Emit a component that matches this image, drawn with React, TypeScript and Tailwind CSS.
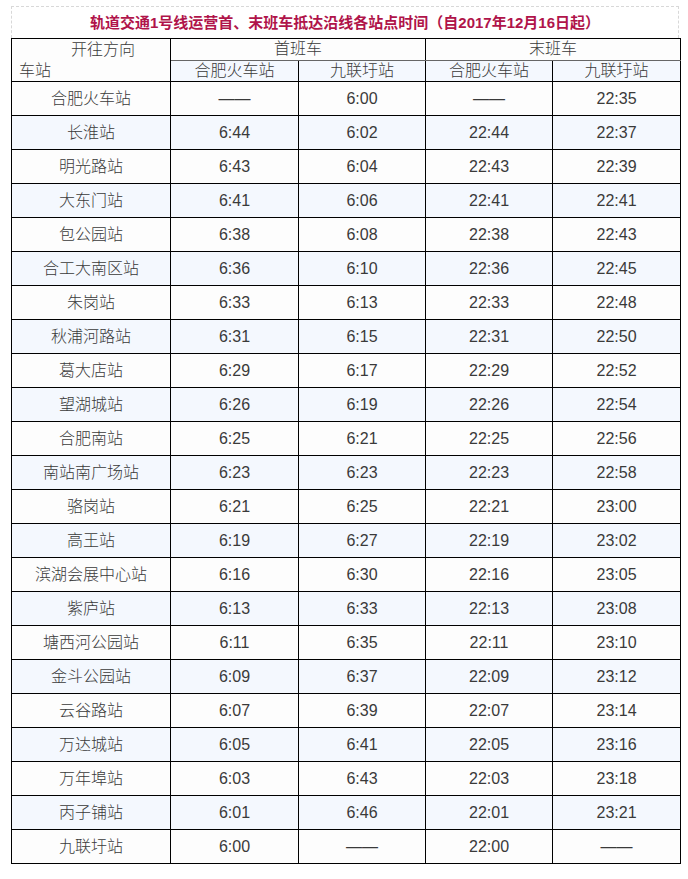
import React from "react";

const rows: [string, string, string, string, string][] = [
  ["合肥火车站", "——", "6:00", "——", "22:35"],
  ["长淮站", "6:44", "6:02", "22:44", "22:37"],
  ["明光路站", "6:43", "6:04", "22:43", "22:39"],
  ["大东门站", "6:41", "6:06", "22:41", "22:41"],
  ["包公园站", "6:38", "6:08", "22:38", "22:43"],
  ["合工大南区站", "6:36", "6:10", "22:36", "22:45"],
  ["朱岗站", "6:33", "6:13", "22:33", "22:48"],
  ["秋浦河路站", "6:31", "6:15", "22:31", "22:50"],
  ["葛大店站", "6:29", "6:17", "22:29", "22:52"],
  ["望湖城站", "6:26", "6:19", "22:26", "22:54"],
  ["合肥南站", "6:25", "6:21", "22:25", "22:56"],
  ["南站南广场站", "6:23", "6:23", "22:23", "22:58"],
  ["骆岗站", "6:21", "6:25", "22:21", "23:00"],
  ["高王站", "6:19", "6:27", "22:19", "23:02"],
  ["滨湖会展中心站", "6:16", "6:30", "22:16", "23:05"],
  ["紫庐站", "6:13", "6:33", "22:13", "23:08"],
  ["塘西河公园站", "6:11", "6:35", "22:11", "23:10"],
  ["金斗公园站", "6:09", "6:37", "22:09", "23:12"],
  ["云谷路站", "6:07", "6:39", "22:07", "23:14"],
  ["万达城站", "6:05", "6:41", "22:05", "23:16"],
  ["万年埠站", "6:03", "6:43", "22:03", "23:18"],
  ["丙子铺站", "6:01", "6:46", "22:01", "23:21"],
  ["九联圩站", "6:00", "——", "22:00", "——"],
];

const font = { fontFamily: '"Liberation Sans", "Noto Sans CJK SC", sans-serif' };

export default function App() {
  return (
    <div className="bg-white w-[688px] h-[879px] pt-[6px] pl-[11px]" style={font}>
      <div className="w-[668px] h-[32px] border-t border-l border-r border-dashed border-[#d8d8d8] flex items-center justify-center">
        <span className="text-[15px] font-bold text-[#b0144a] leading-[31px]">
          轨道交通1号线运营首、末班车抵达沿线各站点时间（自2017年12月16日起）
        </span>
      </div>
      <table className="table-fixed border-collapse w-[669px] text-[16px] text-[#3a3a3a] font-light">
        <colgroup>
          <col className="w-[159px]" />
          <col className="w-[128px]" />
          <col className="w-[127px]" />
          <col className="w-[127px]" />
          <col className="w-[128px]" />
        </colgroup>
        <thead>
          <tr className="h-[21px]">
            <td rowSpan={2} className="border border-black bg-[#fdfdfd] p-0 align-top">
              <div className="leading-[21px] pl-[59px] text-left">开往方向</div>
              <div className="leading-[21px] pl-[7px] text-left">车站</div>
            </td>
            <td colSpan={2} className="border border-black border-b-[#666] bg-[#fdfdfd] p-0 text-center leading-[20px]">首班车</td>
            <td colSpan={2} className="border border-black border-b-[#666] bg-[#fdfdfd] p-0 text-center leading-[20px]">末班车</td>
          </tr>
          <tr className="h-[21px]">
            {["合肥火车站", "九联圩站", "合肥火车站", "九联圩站"].map((t, i) => (
              <td key={i} className="border border-black border-t-[#666] bg-[#f4f8fe] p-0 text-center leading-[20px]">{t}</td>
            ))}
          </tr>
        </thead>
        <tbody>
          {rows.map((r, i) => (
            <tr key={i} className={`h-[34px] ${i % 2 === 1 ? "bg-[#f4f8fe]" : "bg-[#fdfdfd]"}`}>
              {r.map((c, j) => (
                <td key={j} className="border border-black p-0 text-center leading-[20px]">{c}</td>
              ))}
            </tr>
          ))}
        </tbody>
      </table>
    </div>
  );
}
